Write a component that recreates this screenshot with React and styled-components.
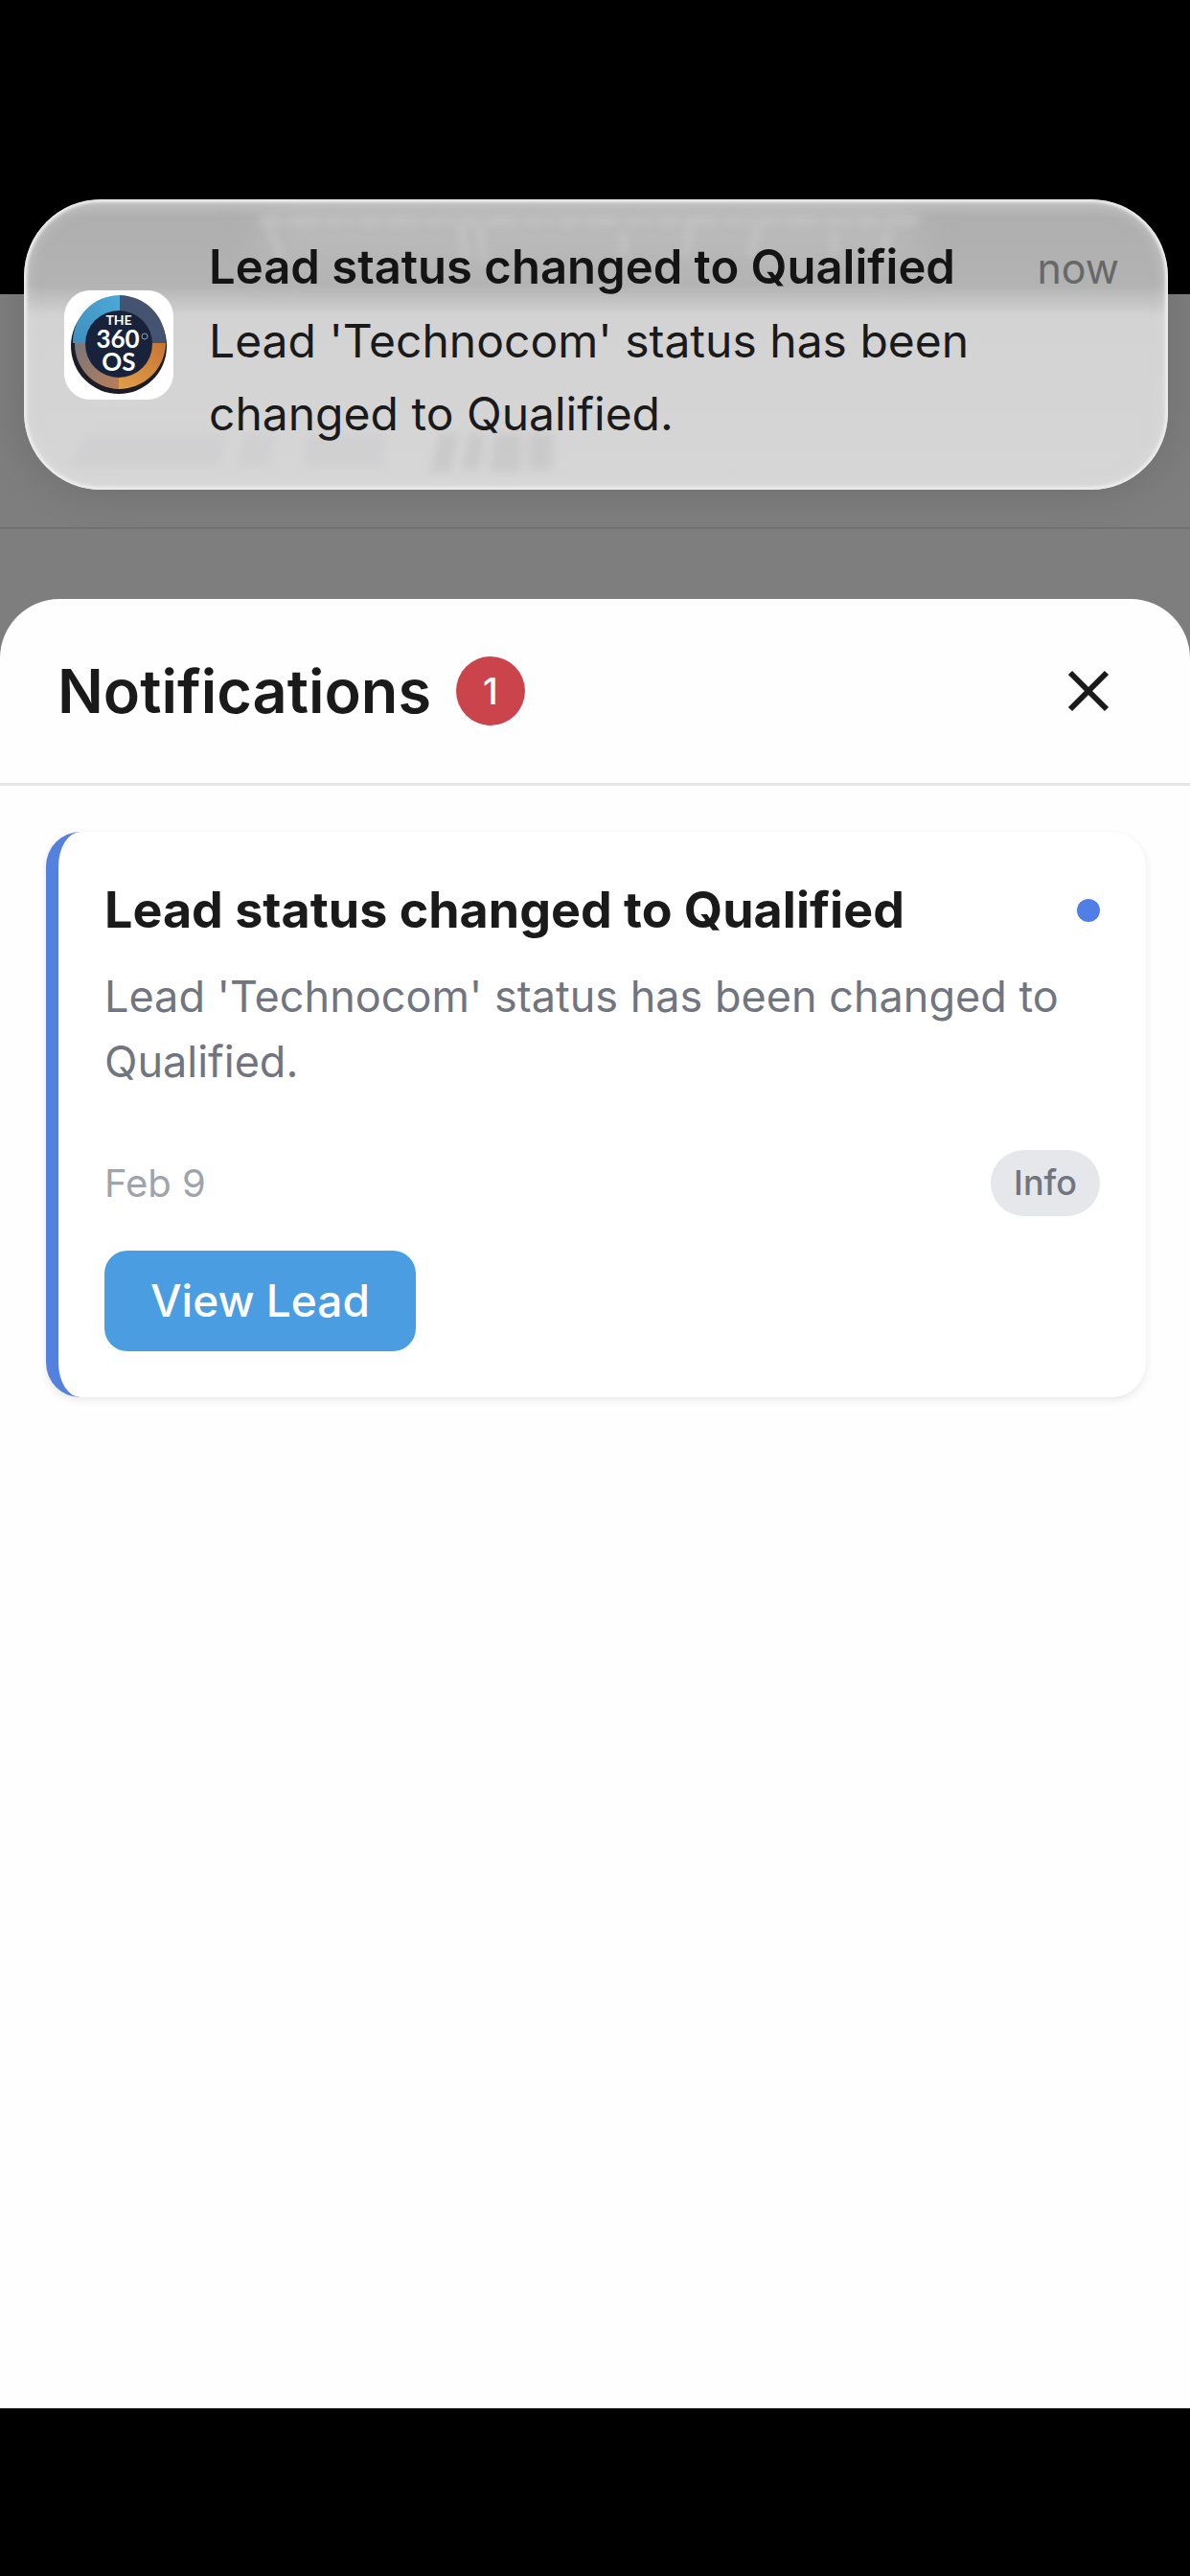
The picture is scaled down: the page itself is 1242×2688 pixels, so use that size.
/*
 * NotificationsScreen
 *
 * Notifications sheet with an incoming push banner over the top of it
 */

import React from 'react';
import styled, { createGlobalStyle } from 'styled-components';

const GlobalStyle = createGlobalStyle`
  *, *::before, *::after {
    box-sizing: border-box;
  }

  body {
    margin: 0;
    background: #000;
    color: #1a1a1a;
    font-family: Inter, "Liberation Sans", sans-serif;
  }

  h1, h2, p {
    margin: 0;
  }

  button {
    font-family: inherit;
    border: 0;
    cursor: pointer;
  }
`;

const Screen = styled.div`
  position: relative;
  display: flex;
  flex-direction: column;
  min-height: 100vh;
  padding: 307px 0 175px;
  background: #000;
`;

const Backdrop = styled.div`
  flex: 1;
  display: flex;
  flex-direction: column;
  background: #7e7e7e;
`;

const DimmedHeader = styled.div`
  height: 245px;
  border-bottom: 2px solid #727272;
`;

const Sheet = styled.main`
  flex: 1;
  margin-top: 73px;
  border-radius: 62px 62px 0 0;
  background: #fefefe;
`;

const SheetHeader = styled.header`
  display: flex;
  align-items: center;
  justify-content: space-between;
  padding: 60px 70px 60px 60px;
  border-bottom: 3px solid #e5e5f0;
`;

const SheetTitle = styled.h1`
  display: flex;
  align-items: center;
  gap: 26px;
  font-size: 63px;
  line-height: 72px;
  font-weight: 600;
`;

const CountBadge = styled.span`
  display: flex;
  align-items: center;
  justify-content: center;
  min-width: 72px;
  height: 72px;
  border-radius: 36px;
  background: #cc444b;
  color: #fff;
  font-size: 38px;
  font-weight: 500;
`;

const CloseButton = styled.button`
  display: flex;
  padding: 0;
  background: none;
  color: #1a1a1a;
`;

const List = styled.div`
  display: grid;
  gap: 36px;
  padding: 48px 46px 48px 48px;
`;

const Card = styled.article`
  padding: 46px 48px 48px;
  border-left: 13px solid #5480de;
  border-radius: 36px;
  background: #fff;
  box-shadow: 0 3px 9px rgba(0, 0, 0, 0.09);
`;

const CardTop = styled.div`
  display: flex;
  align-items: center;
  justify-content: space-between;
  gap: 24px;
`;

const CardTitle = styled.h2`
  font-size: 52px;
  line-height: 72px;
  font-weight: 700;
`;

const UnreadDot = styled.span`
  width: 24px;
  height: 24px;
  border-radius: 50%;
  background: #4f7fe6;
`;

const Message = styled.p`
  padding-top: 20px;
  color: #717580;
  font-size: 45px;
  line-height: 68px;
`;

const Meta = styled.div`
  display: flex;
  align-items: center;
  justify-content: space-between;
  padding-top: 58px;
`;

const DateLabel = styled.time`
  color: #a0a3ab;
  font-size: 40px;
`;

const Tag = styled.span`
  padding: 0 24px;
  border-radius: 36px;
  background: #e5e7eb;
  color: #717580;
  font-size: 36px;
  line-height: 69px;
  font-weight: 500;
`;

const ActionButton = styled.button`
  margin-top: 36px;
  padding: 0 48px;
  border-radius: 24px;
  background: #4a9de0;
  color: #fff;
  font-size: 46px;
  line-height: 105px;
  font-weight: 500;
`;

const Banner = styled.aside`
  position: absolute;
  top: 208px;
  left: 25px;
  right: 23px;
  display: flex;
  align-items: center;
  gap: 37px;
  min-height: 303px;
  padding: 0 51px 0 42px;
  overflow: hidden;
  border-radius: 80px;
  background: linear-gradient(#b9b9b9, #afafaf 20px, #b3b3b3 90px, #d3d3d3 122px, #d6d6d6);
  box-shadow: 0 0 48px rgba(0, 0, 0, 0.14);

  &::after {
    content: "";
    position: absolute;
    inset: 0;
    border-radius: inherit;
    box-shadow: inset 0 0 3px 3px #ececec, inset 0 0 16px 2px rgba(230, 230, 230, 0.5);
  }
`;

const Smudge = styled.svg`
  position: absolute;
  inset: 0;
  width: 100%;
  height: 100%;
`;

const AppIcon = styled.svg`
  position: relative;
  flex: none;
  width: 114px;
  height: 114px;
`;

const BannerBody = styled.div`
  position: relative;
  flex: 1;
  padding-bottom: 8px;
  font-size: 48px;
  line-height: 76px;
`;

const BannerTop = styled.div`
  display: flex;
  align-items: baseline;
  justify-content: space-between;
`;

const BannerTitle = styled.h2`
  color: #141414;
  font-size: 49px;
  font-weight: 600;
`;

const BannerTime = styled.span`
  color: #686868;
  font-size: 43px;
`;

const BannerText = styled.p`
  max-width: 860px;
`;

function CloseIcon() {
  return (
    <svg width="72" height="72" viewBox="0 0 72 72" fill="none" stroke="currentColor" strokeWidth="6" aria-hidden="true">
      <path d="M17 17l38 38M55 17L17 55" />
    </svg>
  );
}

function Logo() {
  return (
    <AppIcon viewBox="0 0 114 114" role="img" aria-label="The 360 OS">
      <defs>
        <linearGradient id="blue" x1="0" y1="1" x2="1" y2="0">
          <stop offset="0" stopColor="#3f8fbd" />
          <stop offset="1" stopColor="#4ca9d6" />
        </linearGradient>
        <linearGradient id="brown" x1="0" y1="0" x2="1" y2="1">
          <stop offset="0" stopColor="#77777d" />
          <stop offset="1" stopColor="#b97d57" />
        </linearGradient>
        <linearGradient id="orange" x1="1" y1="0" x2="0" y2="1">
          <stop offset="0" stopColor="#c97434" />
          <stop offset="1" stopColor="#dfa048" />
        </linearGradient>
      </defs>
      <rect width="114" height="114" rx="27" fill="#fff" />
      <circle cx="57" cy="58" r="50" fill="#1b1c26" />
      <path d="M58 55V5A49 49 0 0 0 9 55z" fill="url(#blue)" />
      <path d="M58 55V5A49 49 0 0 1 106 55z" fill="#44536f" />
      <path d="M57 55H106A49 49 0 0 1 57 103z" fill="url(#orange)" />
      <path d="M57 55H11A47 47 0 0 0 57 103z" fill="url(#brown)" />
      <circle cx="57" cy="56" r="35" fill="#18233b" />
      <text fill="#fff" textAnchor="middle" fontFamily="Lato, sans-serif" fontSize="26" fontWeight="700">
        <tspan x="57" y="36" fontSize="14">THE</tspan>
        <tspan x="56" y="60">360</tspan>
        <tspan x="57" y="84">OS</tspan>
      </text>
      <circle cx="84" cy="48" r="3" fill="none" stroke="#8fa3b5" strokeWidth="1" />
    </AppIcon>
  );
}

// what shows through the frosted glass
function GlassSmudges() {
  return (
    <Smudge aria-hidden="true">
      <defs>
        <filter id="soft" x="-10%" y="-100%" width="120%" height="300%">
          <feGaussianBlur stdDeviation="4" />
        </filter>
        <filter id="softer" x="-20%" y="-100%" width="140%" height="300%">
          <feGaussianBlur stdDeviation="22" />
        </filter>
      </defs>
      <rect x="250" y="10" width="680" height="50" fill="#c8c8c8" opacity="0.5" filter="url(#softer)" />
      <g fill="none" stroke="#cfcfcf" opacity="0.4" filter="url(#soft)">
        <path d="M245 22H940" strokeWidth="12" strokeDasharray="24 4 37 5 18 3 9 4" />
        <path d="M256 28L270 64M456 28L462 66M476 28L480 66M626 34V60M696 28L690 60M766 28L758 60M846 34V60M902 34L896 58" strokeWidth="8" />
      </g>
      <g filter="url(#soft)">
        <path d="M50 278L62 246H212L204 278zM222 278L230 246H262L256 278zM290 278L296 246H378L374 278z" fill="#c3c3c9" opacity="0.3" />
        <path d="M424 284L434 244H454L446 284zM456 282L464 244H482L476 282zM486 284L490 244H520V284zM526 282V244H552V282z" fill="#b8b8b8" opacity="0.4" />
      </g>
    </Smudge>
  );
}

function PushBanner() {
  return (
    <Banner role="status">
      <GlassSmudges />
      <Logo />
      <BannerBody>
        <BannerTop>
          <BannerTitle>Lead status changed to Qualified</BannerTitle>
          <BannerTime>now</BannerTime>
        </BannerTop>
        <BannerText>Lead 'Technocom' status has been changed to Qualified.</BannerText>
      </BannerBody>
    </Banner>
  );
}

const notifications = [
  {
    id: 1,
    title: 'Lead status changed to Qualified',
    message: "Lead 'Technocom' status has been changed to Qualified.",
    date: 'Feb 9',
    type: 'Info',
    action: 'View Lead',
    unread: true,
  },
];

function NotificationCard({ item }) {
  return (
    <Card>
      <CardTop>
        <CardTitle>{item.title}</CardTitle>
        {item.unread && <UnreadDot role="img" aria-label="Unread" />}
      </CardTop>
      <Message>{item.message}</Message>
      <Meta>
        <DateLabel>{item.date}</DateLabel>
        <Tag>{item.type}</Tag>
      </Meta>
      <ActionButton type="button">{item.action}</ActionButton>
    </Card>
  );
}

export default function App() {
  return (
    <>
      <GlobalStyle />
      <Screen>
        <Backdrop>
          <DimmedHeader />
          <Sheet>
            <SheetHeader>
              <SheetTitle>
                Notifications
                <CountBadge>{notifications.length}</CountBadge>
              </SheetTitle>
              <CloseButton type="button" aria-label="Close">
                <CloseIcon />
              </CloseButton>
            </SheetHeader>
            <List>
              {notifications.map((item) => (
                <NotificationCard key={item.id} item={item} />
              ))}
            </List>
          </Sheet>
        </Backdrop>
        <PushBanner />
      </Screen>
    </>
  );
}
